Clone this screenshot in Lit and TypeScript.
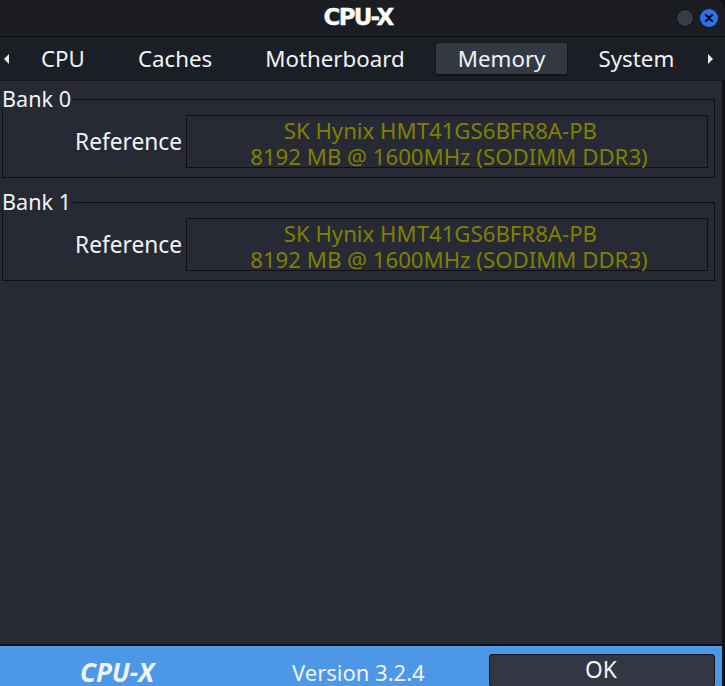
import { LitElement, html, css } from "lit";
import { customElement } from "lit/decorators.js";

const TABS = ["CPU", "Caches", "Motherboard", "Memory", "System"];
const BANKS = ["Bank 0", "Bank 1"];

@customElement("app-root")
export class AppRoot extends LitElement {
  static styles = css`
    :host {
      display: flex;
      flex-direction: column;
      width: 725px;
      height: 686px;
      overflow: hidden;
      background: #101216;
      font-family: "Noto Sans", "Open Sans", sans-serif;
      color: #f0f2f4;
      font-size: 22.7px;
    }
    .titlebar {
      height: 36px;
      flex: none;
      background: #1b1d23;
      border-top-right-radius: 10px;
      position: relative;
      display: flex;
      align-items: center;
      justify-content: center;
      border-bottom: 1px solid #0c0d10;
      box-sizing: content-box;
    }
    .title {
      font-family: "DejaVu Sans", sans-serif;
      font-weight: 700;
      font-size: 23px;
      letter-spacing: -1.8px;
      color: #fafafa;
      -webkit-text-stroke: 0.4px #fafafa;
      margin-top: -3px;
      margin-left: -9px;
    }
    .wm {
      position: absolute;
      right: 7px;
      top: 9px;
      display: flex;
      gap: 6px;
      align-items: center;
    }
    .min {
      width: 16px;
      height: 16px;
      border-radius: 50%;
      background: #383c48;
      border: 1px solid #0d0e12;
    }
    .close { width: 18px; height: 18px; display: block; }
    .tabs {
      height: 43px;
      flex: none;
      background: #1c1e26;
      border-bottom: 1px solid #14161b;
      display: flex;
      align-items: center;
    }
    .arrow { flex: none; display: block; width: 5px; height: 10px; }
    .arrow.l { margin-left: 4px; }
    .arrow.r { margin-left: auto; margin-right: 12px; }
    .tablist { display: flex; margin-left: 9px; align-items: center; gap: 7px; font-size: 22.3px; }
    .tab {
      height: 34px;
      display: flex;
      align-items: center;
      justify-content: center;
      padding: 0 23px;
      box-sizing: border-box;
      border-radius: 3px;
      color: #f0f2f4;
    }
    .tab.active {
      background: #343843;
      border: 1px solid #14161b;
      border-bottom: 2px solid #101216;
      padding: 0 22px;
    }
    .content {
      flex: 1;
      background: #272a34;
      padding: 6px 7px 0 2px;
      display: flex;
      flex-direction: column;
      gap: 12px;
      margin-right: 3px;
    }
    .frame { display: flex; flex-direction: column; }
    .head { display: flex; height: 20px; }
    .legend {
      line-height: 23px;
      padding-right: 2px;
      font-size: 21.6px;
    }
    .rule {
      flex: 1;
      margin-top: 12px;
      border-top: 1px solid #0f1014;
      border-right: 1px solid #0f1014;
    }
    .body {
      border: 1px solid #0f1014;
      border-top: none;
      padding: 8px 6px 9px 0;
      display: flex;
      align-items: center;
    }
    .label { width: 179px; text-align: right; flex: none; }
    .value {
      flex: 1;
      margin-left: 4px;
      height: 53px;
      box-sizing: border-box;
      border: 1px solid #0f1014;
      color: #808000;
      text-align: center;
      font-size: 22.2px;
      line-height: 26px;
      padding: 2px 0 0 4px;
      white-space: nowrap;
    }
    .footer {
      height: 40px;
      flex: none;
      background: #4c98e6;
      border-top: 2px solid #0f1014;
      box-sizing: content-box;
      display: flex;
      align-items: center;
      margin-top: -1px;
      margin-right: 3px;
    }
    .brand {
      margin-left: 80px;
      margin-top: 12px;
      width: 212px;
      flex: none;
      font-style: italic;
      font-weight: 700;
      font-size: 26px;
      color: #eef2f6;
    }
    .ver {
      flex: none;
      width: 197px;
      margin-top: 12px;
      font-size: 22px;
      color: #eef2f6;
    }
    .ok {
      flex: none;
      align-self: flex-start;
      width: 226px;
      height: 33px;
      margin-top: 8px;
      box-sizing: border-box;
      background: #323743;
      border: 1px solid #14161b;
      border-radius: 3px;
      color: #f0f2f4;
      font: inherit;
      line-height: 1;
      padding: 0 2px 1px 0;
    }
  `;

  render() {
    return html`
      <div class="titlebar">
        <span class="title">CPU-X</span>
        <div class="wm">
          <span class="min"></span>
          <svg class="close" viewBox="0 0 18 18">
            <circle cx="9" cy="9" r="9" fill="#2b72ec"></circle>
            <path d="M6 6l6 6M12 6l-6 6" stroke="#0d1017" stroke-width="2.4" stroke-linecap="round"></path>
          </svg>
        </div>
      </div>
      <div class="tabs">
        <svg class="arrow l" viewBox="0 0 5 10"><path d="M5 0v10L0 5z" fill="#e8eaec"></path></svg>
        <div class="tablist">
          ${TABS.map(
            (t) => html`<div class="tab ${t === "Memory" ? "active" : ""}">${t}</div>`
          )}
        </div>
        <svg class="arrow r" viewBox="0 0 5 10"><path d="M0 0v10l5-5z" fill="#e8eaec"></path></svg>
      </div>
      <div class="content">
        ${BANKS.map(
          (b) => html`
            <div class="frame">
              <div class="head"><span class="legend">${b}</span><span class="rule"></span></div>
              <div class="body">
                <span class="label">Reference</span>
                <div class="value">SK Hynix HMT41GS6BFR8A-PB\u00a0\u00a0\u00a0<br />8192 MB @ 1600MHz (SODIMM DDR3)</div>
              </div>
            </div>
          `
        )}
      </div>
      <div class="footer">
        <span class="brand">CPU-X</span>
        <span class="ver">Version 3.2.4</span>
        <button class="ok">OK</button>
      </div>
    `;
  }
}
